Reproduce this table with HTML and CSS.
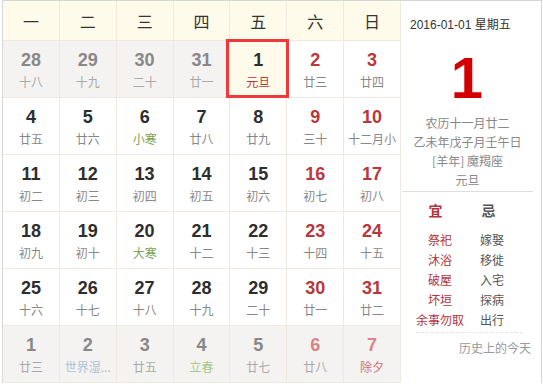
FILE: index.html
```html
<!DOCTYPE html>
<html lang="zh-CN">
<head>
<meta charset="utf-8">
<title>万年历</title>
<link rel="stylesheet" href="styles.css">
</head>
<body>
<div class="cal">
  <div class="grid">
    <div class="wk">一</div><div class="wk">二</div><div class="wk">三</div><div class="wk">四</div><div class="wk">五</div><div class="wk">六</div><div class="wk">日</div>

    <div class="day other"><span class="num">28</span><span class="lunar">十八</span></div>
    <div class="day other"><span class="num">29</span><span class="lunar">十九</span></div>
    <div class="day other"><span class="num">30</span><span class="lunar">二十</span></div>
    <div class="day other"><span class="num">31</span><span class="lunar">廿一</span></div>
    <div class="day today"><span class="num">1</span><span class="lunar fest">元旦</span></div>
    <div class="day wkend"><span class="num">2</span><span class="lunar">廿三</span></div>
    <div class="day wkend"><span class="num">3</span><span class="lunar">廿四</span></div>

    <div class="day"><span class="num">4</span><span class="lunar">廿五</span></div>
    <div class="day"><span class="num">5</span><span class="lunar">廿六</span></div>
    <div class="day"><span class="num">6</span><span class="lunar term">小寒</span></div>
    <div class="day"><span class="num">7</span><span class="lunar">廿八</span></div>
    <div class="day"><span class="num">8</span><span class="lunar">廿九</span></div>
    <div class="day wkend"><span class="num">9</span><span class="lunar">三十</span></div>
    <div class="day wkend"><span class="num">10</span><span class="lunar">十二月小</span></div>

    <div class="day"><span class="num">11</span><span class="lunar">初二</span></div>
    <div class="day"><span class="num">12</span><span class="lunar">初三</span></div>
    <div class="day"><span class="num">13</span><span class="lunar">初四</span></div>
    <div class="day"><span class="num">14</span><span class="lunar">初五</span></div>
    <div class="day"><span class="num">15</span><span class="lunar">初六</span></div>
    <div class="day wkend"><span class="num">16</span><span class="lunar">初七</span></div>
    <div class="day wkend"><span class="num">17</span><span class="lunar">初八</span></div>

    <div class="day"><span class="num">18</span><span class="lunar">初九</span></div>
    <div class="day"><span class="num">19</span><span class="lunar">初十</span></div>
    <div class="day"><span class="num">20</span><span class="lunar term">大寒</span></div>
    <div class="day"><span class="num">21</span><span class="lunar">十二</span></div>
    <div class="day"><span class="num">22</span><span class="lunar">十三</span></div>
    <div class="day wkend"><span class="num">23</span><span class="lunar">十四</span></div>
    <div class="day wkend"><span class="num">24</span><span class="lunar">十五</span></div>

    <div class="day"><span class="num">25</span><span class="lunar">十六</span></div>
    <div class="day"><span class="num">26</span><span class="lunar">十七</span></div>
    <div class="day"><span class="num">27</span><span class="lunar">十八</span></div>
    <div class="day"><span class="num">28</span><span class="lunar">十九</span></div>
    <div class="day"><span class="num">29</span><span class="lunar">二十</span></div>
    <div class="day wkend"><span class="num">30</span><span class="lunar">廿一</span></div>
    <div class="day wkend"><span class="num">31</span><span class="lunar">廿二</span></div>

    <div class="day other"><span class="num">1</span><span class="lunar">廿三</span></div>
    <div class="day other"><span class="num">2</span><span class="lunar intl">世界湿...</span></div>
    <div class="day other"><span class="num">3</span><span class="lunar">廿五</span></div>
    <div class="day other"><span class="num">4</span><span class="lunar term">立春</span></div>
    <div class="day other"><span class="num">5</span><span class="lunar">廿七</span></div>
    <div class="day other wkend"><span class="num">6</span><span class="lunar">廿八</span></div>
    <div class="day other wkend"><span class="num">7</span><span class="lunar fest">除夕</span></div>
  </div>

  <div class="panel">
    <div class="date">2016-01-01 星期五</div>
    <div class="big">1</div>
    <div class="info">
      <div>农历十一月廿二</div>
      <div>乙未年戊子月壬午日</div>
      <div>[羊年] 魔羯座</div>
      <div>元旦</div>
    </div>
    <div class="sep"></div>
    <div class="yj-head"><span class="yi">宜</span><span class="ji">忌</span></div>
    <div class="yj-list">
      <span class="yi-item">祭祀</span><span class="ji-item">嫁娶</span>
      <span class="yi-item">沐浴</span><span class="ji-item">移徙</span>
      <span class="yi-item">破屋</span><span class="ji-item">入宅</span>
      <span class="yi-item">坏垣</span><span class="ji-item">探病</span>
      <span class="yi-item">余事勿取</span><span class="ji-item">出行</span>
    </div>
    <div class="dash"></div>
    <div class="history">历史上的今天</div>
  </div>
</div>
</body>
</html>
```

FILE: styles.css
```css
html, body {
  margin: 0;
  padding: 0;
  background: #ffffff;
}

body {
  font-family: "Noto Sans CJK SC", "Liberation Sans", sans-serif;
}

.cal {
  margin-left: 2px;
  width: 540px;
  box-sizing: border-box;
  border-top: 1px solid #d6d6d6;
  border-left: 1px solid #d6d6d6;
  border-right: 1px solid #d6d6d6;
  display: flex;
}

.grid {
  width: 398px;
  flex: none;
  display: grid;
  grid-template-columns: repeat(7, 1fr);
  grid-template-rows: 40px repeat(6, 57px);
}

.wk {
  background: #fffbea;
  border-right: 1px solid #efe9df;
  border-bottom: 1px solid #efe9df;
  box-sizing: border-box;
  display: flex;
  align-items: center;
  justify-content: center;
  font-size: 16px;
  color: #333;
}

.day {
  position: relative;
  min-width: 0;
  box-sizing: border-box;
  border-right: 1px solid #efe9e2;
  border-bottom: 1px solid #efe9e2;
  display: flex;
  flex-direction: column;
  align-items: center;
  padding-top: 9px;
  background: #ffffff;
}

.num {
  font: bold 18px/20px "Liberation Sans", Arial, sans-serif;
  color: #2e2e2e;
}

.lunar {
  margin-top: 2px;
  font: 12px/20px "Noto Sans CJK SC", sans-serif;
  color: #888;
  white-space: nowrap;
}

.wkend .num { color: #b8383d; }

.term { color: #7ba35a; }
.fest { color: #b8383d; }

.other { background: #f5f3f1; }
.other .num { color: #888; }
.other .lunar { color: #aaa; }
.other .term { color: #a6c98e; }
.other .intl { color: #a9c2d8; }
.other.wkend .num { color: #d68486; }
.other .fest { color: #cf6f73; }

.today { background: #fffbea; }
.today::after {
  content: "";
  position: absolute;
  top: -2px;
  left: -4px;
  right: -3px;
  bottom: -1px;
  border: 3px solid #f03a3a;
  z-index: 2;
}

.panel {
  flex: 1;
  min-width: 0;
  padding-top: 16px;
  font-size: 12px;
  color: #888;
}

.date {
  padding-left: 9px;
  font: 12px/16px "Liberation Sans", "Noto Sans CJK SC", sans-serif;
  color: #333;
}

.big {
  margin-top: 16px;
  padding-right: 8px;
  text-align: center;
  font: bold 58px/58px "Liberation Sans", Arial, sans-serif;
  color: #d40000;
}

.info {
  margin-top: 6px;
  padding-right: 7px;
  text-align: center;
  line-height: 19px;
}

.sep {
  margin: 2px 8px 0 1px;
  border-top: 1px solid #dedede;
}

.yj-head {
  margin-top: 8px;
  padding-left: 8px;
  display: flex;
  font: bold 14px/20px "Noto Sans CJK SC", sans-serif;
}

.yj-head span {
  width: 53px;
  text-align: center;
}

.yi { color: #b3343a; }
.ji { color: #555; }

.yj-list {
  margin-top: 10px;
  padding-left: 13px;
  display: grid;
  grid-template-columns: 52px 52px;
  line-height: 20px;
  text-align: center;
}

.yi-item { color: #b3343a; white-space: nowrap; }
.ji-item { color: #555; }

.dash {
  margin: 2px 18px 0 15px;
  border-top: 1px dashed #e8e3da;
}

.history {
  margin-top: 6px;
  padding-right: 10px;
  text-align: right;
  line-height: 18px;
  color: #999;
}
```
